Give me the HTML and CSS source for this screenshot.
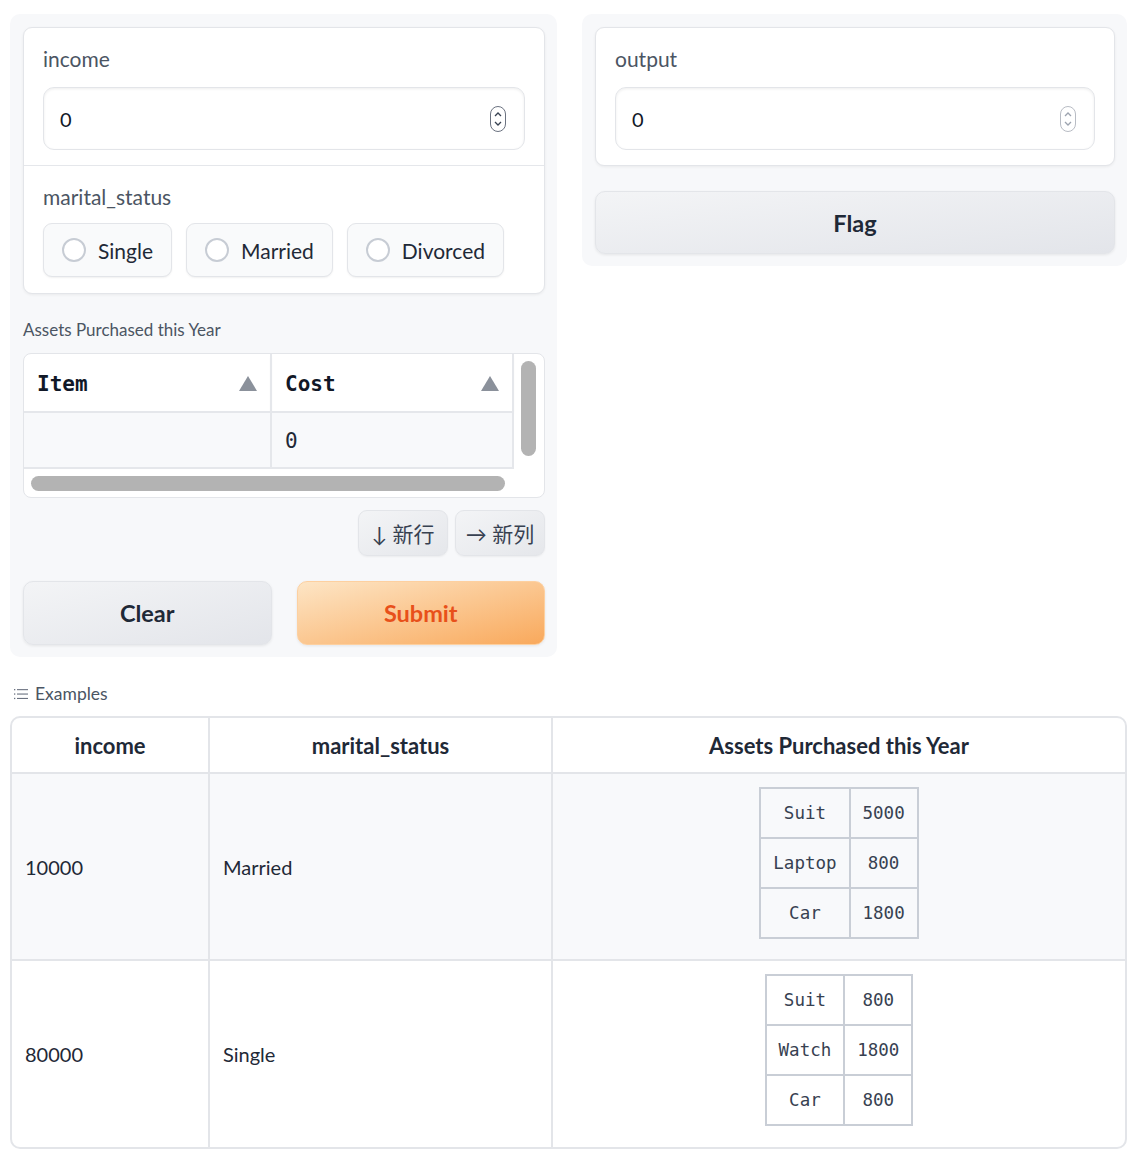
FILE: index.html
```html
<!DOCTYPE html>
<html lang="en">
<head>
  <meta charset="UTF-8" />
  <meta name="viewport" content="width=device-width, initial-scale=1.0"/>
  <title>Interface</title>
  <link rel="stylesheet" href="styles.css">
</head>
<body>

  <!-- inputs / outputs -->
  <div class="top-row">

    <div class="panel">
      <div class="card">
        <div class="block">
          <div class="label">income</div>
          <div class="num-input">
            <span>0</span>
            <svg class="spinner" width="16" height="26" viewBox="0 0 16 26">
              <rect x="0.5" y="0.5" width="15" height="25" rx="7.5" fill="#fff" stroke="#6b7280"/>
              <path d="M5 10 L8 7 L11 10" fill="none" stroke="#374151" stroke-width="1.3"/>
              <path d="M5 16 L8 19 L11 16" fill="none" stroke="#374151" stroke-width="1.3"/>
            </svg>
          </div>
        </div>
        <div class="block block-radio">
          <div class="label">marital_status</div>
          <div class="radios">
            <label class="radio"><span class="dot"></span>Single</label>
            <label class="radio"><span class="dot"></span>Married</label>
            <label class="radio"><span class="dot"></span>Divorced</label>
          </div>
        </div>
      </div>

      <div class="small-label">Assets Purchased this Year</div>
      <div class="frame">
        <table class="grid">
          <tr>
            <th class="col-item">Item<span class="sort"></span></th>
            <th class="col-cost">Cost<span class="sort"></span></th>
          </tr>
          <tr>
            <td></td>
            <td>0</td>
          </tr>
        </table>
        <div class="vbar"><div class="thumb-v"></div></div>
        <div class="hbar"><div class="thumb-h"></div></div>
      </div>

      <div class="row-actions">
        <button class="mini-btn">↓ 新行</button>
        <button class="mini-btn">→ 新列</button>
      </div>

      <div class="main-actions">
        <button class="btn secondary">Clear</button>
        <button class="btn primary">Submit</button>
      </div>
    </div>

    <div class="panel panel-right">
      <div class="card">
        <div class="block">
          <div class="label">output</div>
          <div class="num-input">
            <span>0</span>
            <svg class="spinner light" width="16" height="26" viewBox="0 0 16 26">
              <rect x="0.5" y="0.5" width="15" height="25" rx="7.5" fill="#fff" stroke="#b8bcc4"/>
              <path d="M5 10 L8 7 L11 10" fill="none" stroke="#9ca3af" stroke-width="1.3"/>
              <path d="M5 16 L8 19 L11 16" fill="none" stroke="#9ca3af" stroke-width="1.3"/>
            </svg>
          </div>
        </div>
      </div>
      <button class="btn secondary">Flag</button>
    </div>

  </div>

  <!-- examples -->
  <div class="examples-label">
    <svg width="14" height="12" viewBox="0 0 14 12">
      <g fill="#6b7280">
        <rect x="0" y="1" width="1.3" height="1.3"/>
        <rect x="0" y="5.4" width="1.3" height="1.3"/>
        <rect x="0" y="9.8" width="1.3" height="1.3"/>
        <rect x="3" y="1.1" width="11" height="1.1"/>
        <rect x="3" y="5.5" width="11" height="1.1"/>
        <rect x="3" y="9.9" width="11" height="1.1"/>
      </g>
    </svg>
    Examples
  </div>

  <table class="examples">
    <tr>
      <th class="ex-income">income</th>
      <th class="ex-status">marital_status</th>
      <th>Assets Purchased this Year</th>
    </tr>
    <tr class="shaded">
      <td>10000</td>
      <td>Married</td>
      <td class="ex-assets">
        <table class="mini">
          <tr><td class="m1">Suit</td><td>5000</td></tr>
          <tr><td class="m1">Laptop</td><td>800</td></tr>
          <tr><td class="m1">Car</td><td>1800</td></tr>
        </table>
      </td>
    </tr>
    <tr>
      <td>80000</td>
      <td>Single</td>
      <td class="ex-assets">
        <table class="mini">
          <tr><td class="m1">Suit</td><td>800</td></tr>
          <tr><td class="m1">Watch</td><td>1800</td></tr>
          <tr><td class="m1">Car</td><td>800</td></tr>
        </table>
      </td>
    </tr>
  </table>

</body>
</html>
```

FILE: styles.css
```css
/* Reset */
* {
  margin: 0;
  padding: 0;
  box-sizing: border-box;
}

body {
  font-family: 'Source Sans Pro', Lato, 'Noto Sans', sans-serif;
  color: #1f2937;
  background: #fff;
  padding: 14px 17px 0 10px;
}

/* top row with two panels */
.top-row {
  display: grid;
  grid-template-columns: 547px 545px;
  gap: 25px;
  align-items: start;
}

.panel {
  background: #f7f8fa;
  border-radius: 10px;
  padding: 13px 12px 12px 13px;
  display: flex;
  flex-direction: column;
}

.panel-right {
  padding-left: 13px;
  padding-right: 12px;
}

.card {
  background: #fff;
  border: 1px solid #e3e5e9;
  border-radius: 9px;
  box-shadow: 0 1px 3px rgba(0, 0, 0, 0.06);
}

.block {
  padding: 17px 19px 15px;
}

.block-radio {
  border-top: 1px solid #e5e7eb;
  padding-bottom: 16px;
}

.label {
  font-size: 21px;
  color: #4b5563;
  line-height: 28px;
  margin-bottom: 14px;
}

.block-radio .label {
  margin-bottom: 12px;
}

.num-input {
  height: 63px;
  border: 1px solid #e3e5e9;
  border-radius: 11px;
  box-shadow: inset 0 1px 3px rgba(0, 0, 0, 0.07);
  display: flex;
  align-items: center;
  justify-content: space-between;
  padding: 0 18px 0 16px;
  font-size: 20px;
  color: #111827;
}

/* radio options */
.radios {
  display: flex;
  gap: 14px;
}

.radio {
  display: flex;
  align-items: center;
  gap: 12px;
  height: 54px;
  padding: 0 18px 0 18px;
  border: 1px solid #e3e5e9;
  border-radius: 9px;
  background: #f9fafb;
  box-shadow: 0 1px 2px rgba(0, 0, 0, 0.06);
  font-size: 21px;
  color: #1f2937;
}

.dot {
  width: 24px;
  height: 24px;
  border-radius: 50%;
  border: 2px solid #c7ccd4;
  background: #fff;
}

/* dataframe */
.small-label {
  font-size: 17px;
  color: #4b5563;
  margin: 26px 0 13px;
  line-height: 20px;
}

.frame {
  display: grid;
  grid-template-columns: 490px 1fr;
  grid-template-rows: auto 28px;
  border: 1px solid #e3e5e9;
  border-radius: 8px;
  overflow: hidden;
  background: #fff;
}

.grid {
  border-collapse: collapse;
  width: 490px;
  font-family: 'DejaVu Sans Mono', 'Liberation Mono', monospace;
}

.grid th,
.grid td {
  text-align: left;
  font-size: 21px;
  padding: 0 13px;
  border-right: 2px solid #e5e7eb;
  border-bottom: 2px solid #e5e7eb;
}

.grid th {
  height: 58px;
  padding-top: 3px;
  font-weight: bold;
  color: #111827;
  box-shadow: 0 2px 3px rgba(0, 0, 0, 0.05);
}

.grid td {
  height: 56px;
  padding-top: 2px;
  background: #f8f9fb;
  color: #1f2937;
}

.col-item { width: 247px; }

.sort {
  float: right;
  width: 0;
  height: 0;
  margin-top: 4px;
  border-left: 9px solid transparent;
  border-right: 9px solid transparent;
  border-bottom: 15px solid #8b919b;
}

.vbar {
  padding: 7px 7px 0 7px;
}

.thumb-v {
  width: 15px;
  height: 95px;
  background: #b3b3b3;
  border-radius: 8px;
}

.hbar {
  grid-column: 1 / 3;
  padding: 7px 0 0 7px;
}

.thumb-h {
  width: 474px;
  height: 15px;
  background: #b3b3b3;
  border-radius: 8px;
}

/* add row / column */
.row-actions {
  display: flex;
  justify-content: flex-end;
  gap: 7px;
  margin-top: 12px;
}

.mini-btn {
  height: 46px;
  width: 90px;
  font-size: 21px;
  font-family: 'Source Sans Pro', Lato, 'Noto Sans CJK SC', sans-serif;
  color: #374151;
  background: linear-gradient(to bottom right, #f3f4f6, #e5e7eb);
  border: 1px solid #e3e5e9;
  border-radius: 9px;
  box-shadow: 0 1px 2px rgba(0, 0, 0, 0.05);
}

.main-actions {
  display: grid;
  grid-template-columns: 1fr 1fr;
  gap: 25px;
  margin-top: 25px;
}

.btn {
  height: 64px;
  font-family: inherit;
  font-size: 23.5px;
  font-weight: bold;
  border-radius: 10px;
  cursor: pointer;
  box-shadow: 0 1px 3px rgba(0, 0, 0, 0.08);
}

.btn.secondary {
  color: #1f2937;
  background: linear-gradient(to bottom right, #f3f4f6, #e3e5ea);
  border: 1px solid #e3e5e9;
}

.btn.primary {
  color: #e8501a;
  background: linear-gradient(to bottom right, #fde5c5, #f9a95c);
  border: 1px solid #fdd0a0;
}

.panel-right .btn {
  margin-top: 25px;
  height: 63px;
}

/* examples */
.examples-label {
  display: flex;
  align-items: center;
  gap: 7px;
  font-size: 17.5px;
  color: #4b5563;
  margin: 26px 0 11px 4px;
  line-height: 22px;
}

.examples {
  width: 100%;
  border-collapse: separate;
  border-spacing: 0;
  border: 2px solid #e3e5e9;
  border-radius: 10px;
  overflow: hidden;
}

.examples th {
  height: 56px;
  font-size: 22px;
  font-weight: bold;
  color: #1f2937;
  border-bottom: 2px solid #e3e5e9;
  border-right: 2px solid #e3e5e9;
}

.examples > tbody > tr > td {
  font-size: 20px;
  color: #1f2937;
  padding: 0 13px;
  border-right: 2px solid #e3e5e9;
  height: 186px;
}

.examples .shaded > td {
  height: 187px;
}

.examples th:last-child,
.examples > tbody > tr > td:last-child {
  border-right: none;
}

.examples .shaded > td {
  background: #f8f9fb;
  border-bottom: 2px solid #e3e5e9;
}

.ex-income { width: 198px; }
.ex-status { width: 343px; }

.examples > tbody > tr > td.ex-assets {
  text-align: center;
  padding-bottom: 8px;
}

.mini {
  display: inline-table;
  border-collapse: collapse;
  font-family: 'DejaVu Sans Mono', 'Liberation Mono', monospace;
  font-size: 17.5px;
  color: #374151;
  vertical-align: middle;
}

.mini td {
  border: 2px solid #c9ced6;
  height: 50px;
  padding: 0 12px;
  text-align: center;
}
```
